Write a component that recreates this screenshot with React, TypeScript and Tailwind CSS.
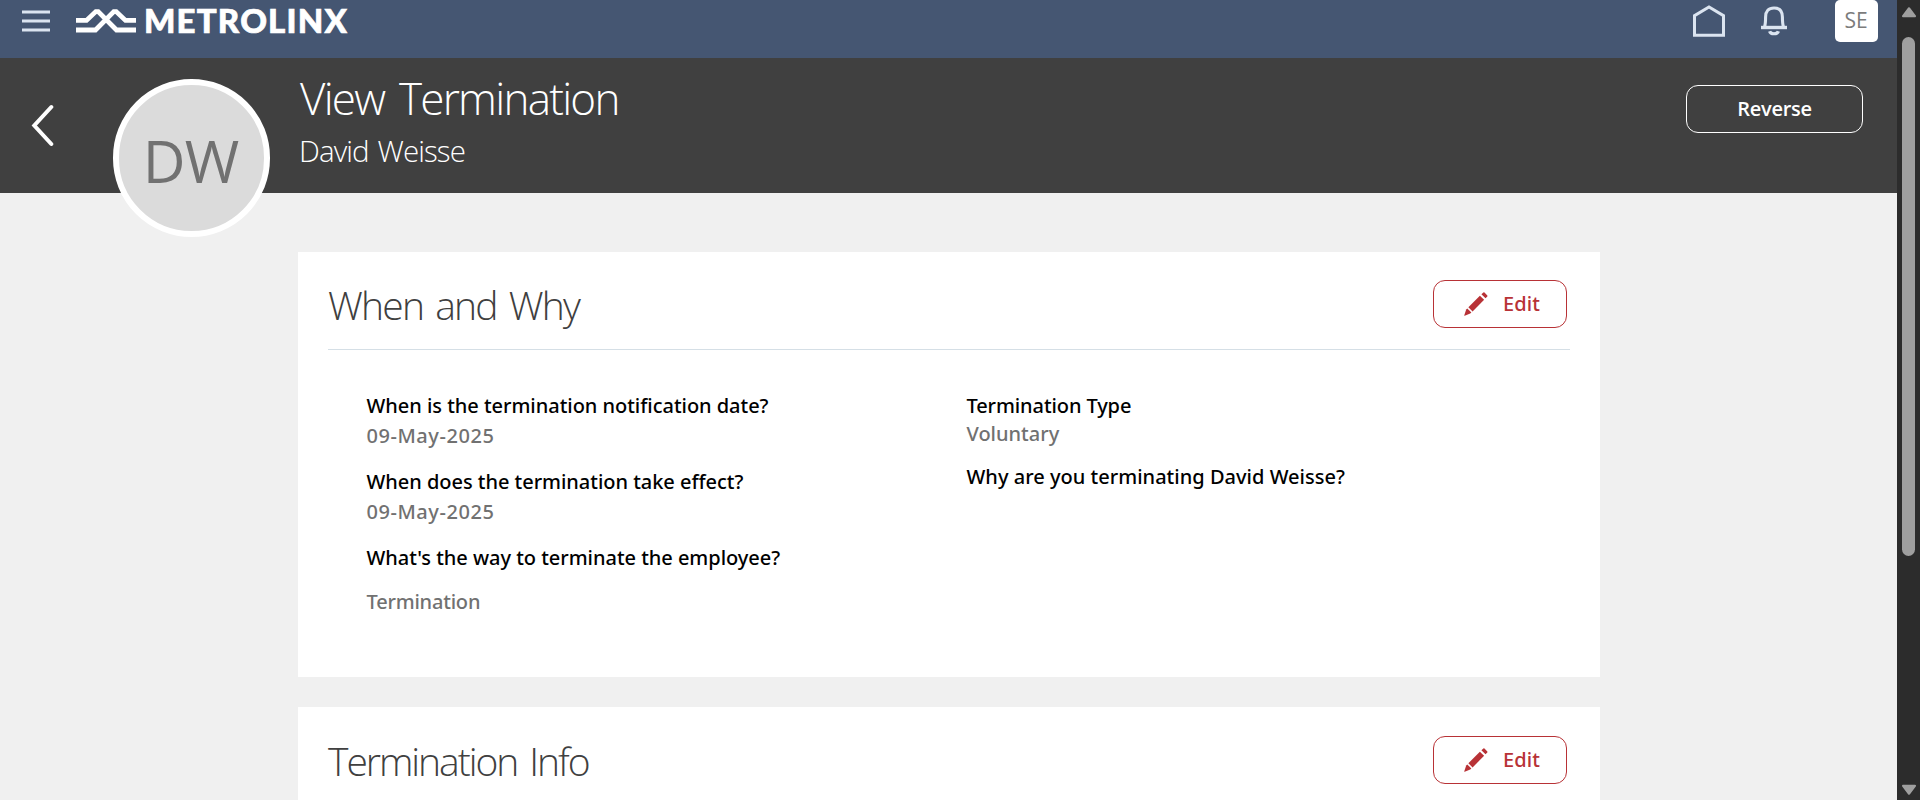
import type { ReactNode } from "react";

function PencilIcon() {
  return (
    <svg className="h-6 w-6 shrink-0" viewBox="0 0 24 24" fill="#b83236">
      <path d="M17.4 2.3 L19.4 .4 Q20 0 20.5 .5 L23.3 3.4 Q23.8 4 23.3 4.5 L21.5 6.3 Z" />
      <path d="M15.9 3.7 L20.1 7.8 L8.6 19.4 L4.4 15.2 Z" />
      <path d="M2.2 17.6 L3.3 16.4 L7.4 20.5 L6.2 21.6 L.7 23.7 Q.1 23.8 .3 23.2 Z" />
    </svg>
  );
}

function EditButton() {
  return (
    <button className="flex h-12 w-[134px] items-center rounded-xl border border-[#b83236] pl-[30px] text-[#b83236]">
      <PencilIcon />
      <span className="ml-[15px] font-['Noto_Sans',sans-serif] text-xl leading-7 font-medium tracking-[0.1px]">Edit</span>
    </button>
  );
}

function MetrolinxLogo() {
  return (
    <div className="ml-[26px] flex h-10 items-center">
      <svg className="h-[26px] w-[60px]" viewBox="0 0 60 26" fill="none" stroke="#fff" strokeWidth="4.8">
        <path d="M0 13.4 H10.5 L19.8 4.6 H22.2 L40.5 23 H60" />
        <path d="M0 23 H19.5 L37.8 4.6 H40.2 L49.5 13.4 H60" />
      </svg>
      <span className="-mt-px ml-[8px] font-['Lato'] text-[33px] leading-10 font-black tracking-[1.2px] text-white [-webkit-text-stroke:0.7px_white]">
        METROLINX
      </span>
    </div>
  );
}

function TopBar() {
  return (
    <header className="flex h-[58px] shrink-0 items-start bg-[#455672] pr-[19px] pl-[22px]">
      <svg className="mt-[9px] h-6 w-7" viewBox="0 0 28 24" fill="none" stroke="#dbe4f0" strokeWidth="2.8">
        <path d="M0 3 H28 M0 12 H28 M0 21 H28" />
      </svg>
      <MetrolinxLogo />
      <div className="ml-auto flex items-start">
        <svg className="mt-1 h-[34px] w-8" viewBox="0 0 32 34" fill="none" stroke="#dbe4f0" strokeWidth="3">
          <path d="M1.5 31.2 V11.6 L16 3 L30.5 11.6 V31.2 Z" />
        </svg>
        <svg className="mt-[5px] ml-9 h-8 w-[26px]" viewBox="0 0 26 32" fill="none" stroke="#dbe4f0">
          <path d="M0 22.5 H26" strokeWidth="3.4" />
          <path d="M3.4 22.4 C4.6 19 4.6 15.5 4.6 12 C4.6 6.2 7.6 3 13 3 C18.4 3 21.4 6.2 21.4 12 C21.4 15.5 21.4 19 22.6 22.4" strokeWidth="3.1" />
          <path d="M8.6 26.2 C9.6 29.6 16.4 29.6 17.4 26.2" strokeWidth="3.2" />
        </svg>
        <div className="ml-12 flex h-[42px] w-[43px] items-center justify-center rounded-[5px] bg-white text-[21px] leading-7 text-[#7c7c7c]">
          <span className="-mt-[3px] -ml-px">SE</span>
        </div>
      </div>
    </header>
  );
}

function TitleBar() {
  return (
    <section className="flex h-[135px] shrink-0 items-start bg-[#404040] pr-[34px] pl-[30px] text-white">
      <svg className="mt-[46px] h-[43px] w-6" viewBox="0 0 24 43" fill="none" stroke="#fff" strokeWidth="4" strokeLinecap="round">
        <path d="M21.3 3 L4.3 21.5 L21.3 40" />
      </svg>
      <div className="z-10 mt-[21px] ml-[59px] flex h-[158px] w-[157px] shrink-0 items-center justify-center rounded-full border-6 border-white bg-[#dbdbdb] text-[59px] leading-[80px] text-[#717171]">
        <span className="mt-[3px] -ml-[2px] tracking-[-0.8px]">DW</span>
      </div>
      <div className="ml-[30px] pt-[10px]">
        <h1 className="text-[44px] leading-[60px] font-light tracking-[-1.75px] [word-spacing:5px]">View Termination</h1>
        <p className="mt-[3px] -ml-px text-[29.5px] leading-10 font-light tracking-[-0.9px] [word-spacing:2px]">David Weisse</p>
      </div>
      <button className="mt-[27px] ml-auto flex h-12 w-[177px] items-center justify-center rounded-xl border border-white text-xl leading-7 font-semibold tracking-[-0.3px]">
        Reverse
      </button>
    </section>
  );
}

function Label({ children }: { children: ReactNode }) {
  return (
    <dt className="font-['Noto_Sans',sans-serif] text-xl leading-7 font-medium tracking-[-0.03px] text-black">
      {children}
    </dt>
  );
}

function DateValue({ children }: { children: ReactNode }) {
  return (
    <dd className="mt-[2px] mb-[18px] font-['Noto_Sans',sans-serif] text-xl leading-7 font-medium tracking-[0.55px] text-[#717171]">
      {children}
    </dd>
  );
}

function ScrollBar() {
  return (
    <aside className="flex h-full w-[23px] shrink-0 flex-col items-center bg-[#2c2c2c]">
      <svg className="mt-[7px] h-[11px] w-4" viewBox="0 0 16 11" fill="#9f9f9f" stroke="#9f9f9f" strokeWidth="2" strokeLinejoin="round">
        <path d="M8 1.2 L14 9.2 H2 Z" />
      </svg>
      <div className="mt-[19px] h-[519px] w-[13px] rounded-full bg-[#9f9f9f]" />
      <svg className="mt-auto mb-[5px] h-[11px] w-4" viewBox="0 0 16 11" fill="#9f9f9f" stroke="#9f9f9f" strokeWidth="2" strokeLinejoin="round">
        <path d="M8 9.8 L14 1.8 H2 Z" />
      </svg>
    </aside>
  );
}

export default function App() {
  return (
    <div className="flex h-[800px] w-[1920px] overflow-hidden bg-[#f0f0f0]">
      <div className="flex w-[1897px] flex-col font-['Open_Sans','Noto_Sans',sans-serif]">
        <TopBar />
        <TitleBar />
        <main className="mt-[59px] ml-[298px] flex w-[1302px] flex-col gap-[30px]">
          <section className="h-[425px] shrink-0 bg-white px-[30px]">
            <div className="flex h-[98px] items-start justify-between border-b border-[#d5dfe6] pr-[3px]">
              <h2 className="mt-[26px] text-[39px] leading-[54px] font-light tracking-[-1.75px] text-[#404040] [word-spacing:3.5px]">
                When and Why
              </h2>
              <div className="mt-7">
                <EditButton />
              </div>
            </div>
            <div className="grid grid-cols-[600px_1fr] pt-[42px] pl-[38.5px]">
              <dl>
                <Label>When is the termination notification date?</Label>
                <DateValue>09-May-2025</DateValue>
                <Label>When does the termination take effect?</Label>
                <DateValue>09-May-2025</DateValue>
                <Label>What's the way to terminate the employee?</Label>
                <dd className="mt-4 font-['Noto_Sans',sans-serif] text-xl leading-7 font-medium tracking-[-0.2px] text-[#717171]">
                  Termination
                </dd>
              </dl>
              <dl>
                <dt className="font-['Noto_Sans',sans-serif] text-xl leading-7 font-medium tracking-[-0.1px] text-black">
                  Termination Type
                </dt>
                <dd className="mb-[15px] font-['Noto_Sans',sans-serif] text-xl leading-7 font-medium text-[#717171]">
                  Voluntary
                </dd>
                <dt className="font-['Noto_Sans',sans-serif] text-xl leading-7 font-medium tracking-[0.02px] text-black">
                  Why are you terminating David Weisse?
                </dt>
              </dl>
            </div>
          </section>
          <section className="h-[200px] shrink-0 bg-white px-[30px]">
            <div className="flex items-start justify-between pr-[3px]">
              <h2 className="mt-[27px] text-[39px] leading-[54px] font-light tracking-[-2.05px] text-[#404040] [word-spacing:4px]">
                Termination Info
              </h2>
              <div className="mt-[29px]">
                <EditButton />
              </div>
            </div>
          </section>
        </main>
      </div>
      <ScrollBar />
    </div>
  );
}
